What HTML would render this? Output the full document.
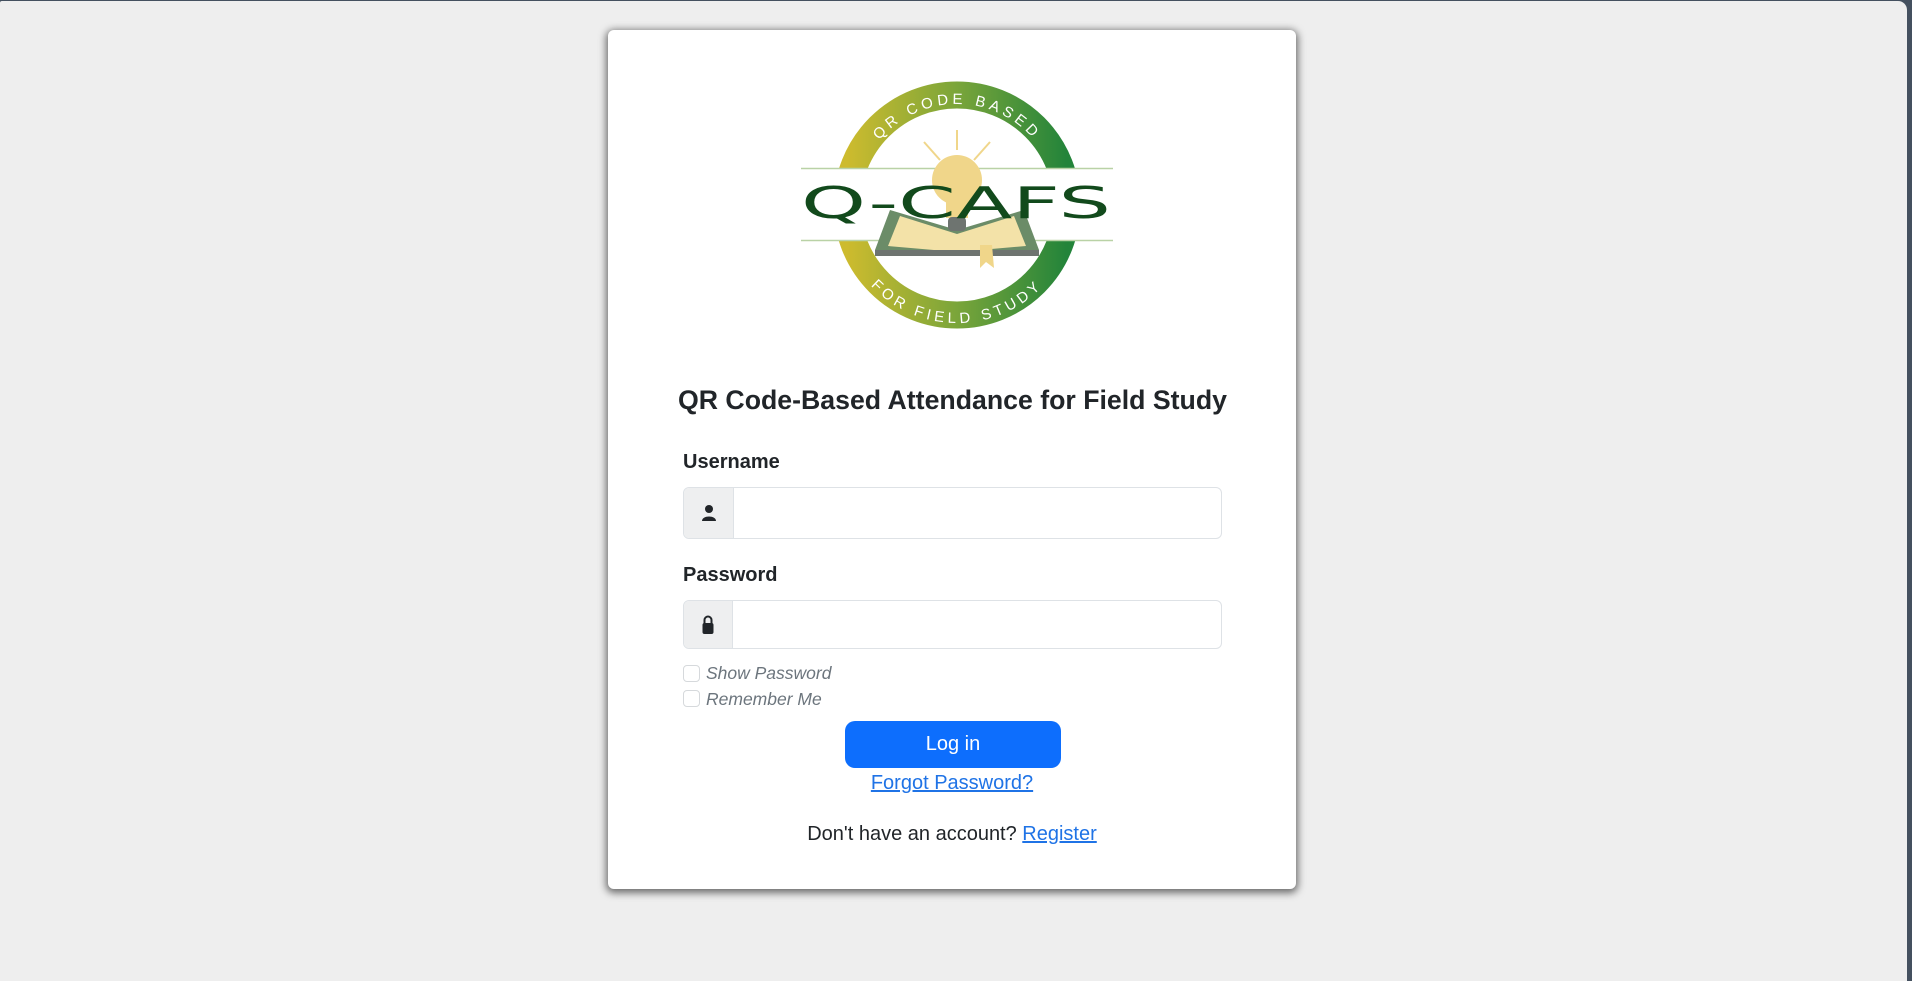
<!DOCTYPE html>
<html><head><meta charset="utf-8"><style>
*{box-sizing:border-box;margin:0;padding:0}
html,body{width:1912px;height:975px;overflow:hidden;background:#44505f;font-family:"Liberation Sans",Arial,sans-serif}
.page{position:absolute;left:0;top:1px;width:1907px;height:980px;background:#eeeeee;border-radius:2px 9px 0 0}
.card{position:absolute;left:608px;top:30px;width:688px;height:859px;background:#fff;border-radius:6px;box-shadow:0 2px 8px 2px rgba(0,0,0,.55)}
.abs{position:absolute}
.lbl{left:683px;font-weight:bold;font-size:20px;color:#212529}
.inp{left:683px;width:539px;border:1px solid #dee2e6;border-radius:6px;background:#fff;overflow:hidden}
.add{position:absolute;left:0;top:0;bottom:0;width:50px;background:#eeeff0;border-right:1px solid #dee2e6}
.cb{left:683px;width:17px;height:17px;border:1px solid #d6d9dc;border-radius:4px;background:#fff}
.cbt{left:706px;font-style:italic;font-size:17.5px;color:#6c757d}
.btn{left:845px;top:721px;width:216px;height:47px;background:#0d6efd;border-radius:10px;color:#fff;font-size:20px;text-align:center;line-height:47px}
a{color:#1f73e6;text-decoration:underline}
</style></head><body>
<div class="page"></div>
<div class="card"></div>
<svg class="abs" style="left:780px;top:60px" width="360" height="300" viewBox="0 0 360 300">
<defs>
<linearGradient id="g" x1="0" x2="1" y1="0" y2="0"><stop offset="0" stop-color="#cdbb2e"/><stop offset=".5" stop-color="#7aa53a"/><stop offset="1" stop-color="#23843a"/></linearGradient>
<path id="top" d="M76,145 A101,101 0 0 1 278,145"/>
<path id="bot" d="M59,145 A118,118 0 0 0 295,145"/>
</defs>
<circle cx="177" cy="145" r="110" fill="none" stroke="url(#g)" stroke-width="27"/>
<rect x="21" y="108" width="312" height="73" fill="#fff"/>
<line x1="21" y1="108.5" x2="333" y2="108.5" stroke="#b9d2a6" stroke-width="1.5"/>
<line x1="21" y1="180.5" x2="333" y2="180.5" stroke="#b9d2a6" stroke-width="1.5"/>
<g stroke="#f0d68a" stroke-width="2"><line x1="177" y1="70" x2="177" y2="90"/><line x1="144" y1="82" x2="160" y2="100"/><line x1="210" y1="82" x2="194" y2="100"/></g>
<path d="M95,190 L110,150 L177,170 L244,150 L259,190 L177,196 Z" fill="#6b8c68"/>
<path d="M108,186 L120,156 L177,174 L234,156 L246,186 L177,192 Z" fill="#f3e2a8"/>
<rect x="95" y="190" width="164" height="6" fill="#6e7470"/>
<path d="M200,185 L212,185 L214,208 L206,202 L200,208 Z" fill="#f0d68a"/>
<circle cx="177" cy="120" r="25" fill="#f0d68a"/>
<rect x="166" y="136" width="22" height="22" fill="#f0d68a"/>
<rect x="168" y="157" width="18" height="14" rx="4" fill="#6e7470"/>
<text x="21" y="158" font-family="DejaVu Sans,sans-serif" font-size="44" fill="#124a1c" textLength="310" lengthAdjust="spacingAndGlyphs">Q-CAFS</text>
<text font-family="Liberation Sans,sans-serif" font-size="15" fill="#fff" letter-spacing="4"><textPath href="#top" startOffset="50%" text-anchor="middle">QR CODE BASED</textPath></text>
<text font-family="Liberation Sans,sans-serif" font-size="15" fill="#fff" letter-spacing="4"><textPath href="#bot" startOffset="50%" text-anchor="middle">FOR FIELD STUDY</textPath></text>
</svg>
<svg class="abs" style="left:678px;top:380px" width="560" height="40"><text x="0" y="29" font-family="Liberation Sans,sans-serif" font-weight="bold" font-size="27" fill="#212529" textLength="549" lengthAdjust="spacingAndGlyphs">QR Code-Based Attendance for Field Study</text></svg>
<div class="abs lbl" style="top:451px">Username</div>
<div class="abs inp" style="top:487px;height:52px"><div class="add">
<svg style="position:absolute;left:17px;top:16px" width="16" height="18" viewBox="0 0 16 18"><circle cx="8" cy="5" r="4" fill="#212529"/><path d="M1,17 C1,11 15,11 15,17 Z" fill="#212529"/></svg></div></div>
<div class="abs lbl" style="top:564px">Password</div>
<div class="abs inp" style="top:600px;height:49px"><div class="add" style="width:49px">
<svg style="position:absolute;left:17px;top:13px" width="14" height="22" viewBox="0 0 14 22"><path d="M3.5,10 V6 a3.5,3.5 0 0 1 7,0 V10" fill="none" stroke="#212529" stroke-width="2"/><rect x="1.5" y="9" width="11" height="11" rx="2" fill="#212529"/></svg></div></div>
<div class="abs cb" style="top:665px"></div>
<div class="abs cbt" style="top:663px">Show Password</div>
<div class="abs cb" style="top:690px"></div>
<div class="abs cbt" style="top:689px">Remember Me</div>
<div class="abs btn">Log in</div>
<div class="abs" style="left:-4px;width:1912px;top:772px;text-align:center;font-size:20px"><a>Forgot Password?</a></div>
<div class="abs" style="left:-4px;width:1912px;top:823px;text-align:center;font-size:20px;color:#212529">Don't have an account? <a>Register</a></div>
</body></html>
